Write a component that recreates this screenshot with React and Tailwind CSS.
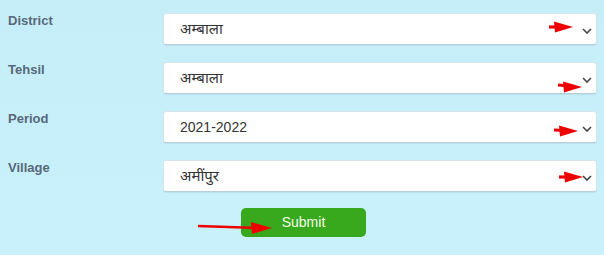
import React from "react";

const fields = [
  { label: "District", value: "अम्बाला", hindi: true, arrow: { x: 385, y: 13, tilt: 0 } },
  { label: "Tehsil", value: "अम्बाला", hindi: true, arrow: { x: 394, y: 22, tilt: 2 } },
  { label: "Period", value: "2021-2022", hindi: false, arrow: { x: 390, y: 18, tilt: 1 } },
  { label: "Village", value: "अमींपुर", hindi: true, arrow: { x: 395, y: 16, tilt: 0 } },
];

const RedArrow = ({ x, y, tilt }) => (
  <svg
    className="absolute pointer-events-none"
    style={{ left: x - 2, top: y - 8 }}
    width="30"
    height="16"
    viewBox="0 0 30 16"
  >
    <line x1="2" y1="8" x2="14" y2={8 + tilt / 2} stroke="#ee0000" strokeWidth="3.2" />
    <polygon points={`7,${2.5 + tilt} 26,${8 + tilt} 8,${13.5 + tilt}`} fill="#ee0000" />
  </svg>
);

const Chevron = () => (
  <svg
    className="absolute right-[4px] top-[14px]"
    width="10"
    height="6"
    viewBox="0 0 10 6"
  >
    <polyline points="1,1 5,5 9,1" fill="none" stroke="#444" strokeWidth="1.6" />
  </svg>
);

export default function App() {
  return (
    <div className="w-[604px] h-[255px] overflow-hidden bg-gradient-to-b from-[#c5eef8] to-[#c9f1fb] pt-[13px] pl-2 pr-[7px] font-['Liberation_Sans',Arial,'Noto_Sans',sans-serif]">
      {fields.map((f) => (
        <div key={f.label} className="flex h-8 mb-[17px]">
          <div className="w-[155px] text-[13px] leading-4 font-bold text-[#58697a]">
            {f.label}
          </div>
          <div
            className={`relative flex-1 flex items-center bg-white rounded-[3px] border border-[#d6e4ea] border-b-[#b9cdd6] shadow-[0_1px_1px_rgba(0,0,0,0.06)] pl-4 text-[#333] ${
              f.hindi ? "text-[15px]" : "text-[14px]"
            }`}
          >
            {f.value}
            <Chevron />
            <RedArrow {...f.arrow} />
          </div>
        </div>
      ))}
      <div className="relative -mt-[1px] pl-[233px]">
        <button className="w-[125px] h-[29px] rounded-[5px] bg-[#38a91d] text-[#f4ffe8] text-[14px] leading-none pb-[2px]">
          Submit
        </button>
        <svg
          className="absolute left-[188px] top-[11px] pointer-events-none"
          width="80"
          height="16"
          viewBox="0 0 80 16"
        >
          <line x1="2" y1="7" x2="62" y2="9" stroke="#ee0000" strokeWidth="2.5" />
          <polygon points="55,3 76,9 56,15" fill="#ee0000" />
        </svg>
      </div>
    </div>
  );
}
